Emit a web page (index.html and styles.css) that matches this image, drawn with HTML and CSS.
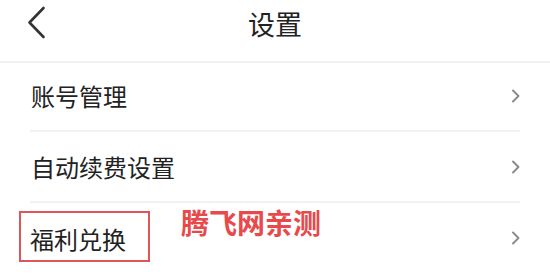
FILE: index.html
```html
<!DOCTYPE html>
<html lang="zh-CN">
<head>
<meta charset="utf-8">
<title>设置</title>
<link rel="stylesheet" href="styles.css">
</head>
<body>
<div class="page">
  <header class="topbar">
    <svg class="back" width="20" height="34" viewBox="0 0 20 34" aria-hidden="true">
      <polyline points="16.5,2 2.5,16.5 16.5,31" fill="none" stroke="#333" stroke-width="2.6" stroke-linecap="round" stroke-linejoin="round"/>
    </svg>
    <h1 class="title">设置</h1>
  </header>
  <ul class="list">
    <li class="row">
      <span class="label">账号管理</span>
      <svg class="arrow" width="10" height="14" viewBox="0 0 10 14" aria-hidden="true"><polyline points="2,1.5 7.5,7 2,12.5" fill="none" stroke="#8a8a8a" stroke-width="1.9" stroke-linecap="round" stroke-linejoin="round"/></svg>
    </li>
    <li class="row">
      <span class="label">自动续费设置</span>
      <svg class="arrow" width="10" height="14" viewBox="0 0 10 14" aria-hidden="true"><polyline points="2,1.5 7.5,7 2,12.5" fill="none" stroke="#8a8a8a" stroke-width="1.9" stroke-linecap="round" stroke-linejoin="round"/></svg>
    </li>
    <li class="row row-last">
      <div class="group">
        <span class="label mark">福利兑换</span>
        <span class="stamp">腾飞网亲测</span>
      </div>
      <svg class="arrow" width="10" height="14" viewBox="0 0 10 14" aria-hidden="true"><polyline points="2,1.5 7.5,7 2,12.5" fill="none" stroke="#8a8a8a" stroke-width="1.9" stroke-linecap="round" stroke-linejoin="round"/></svg>
    </li>
  </ul>
</div>
</body>
</html>
```

FILE: styles.css
```css
html, body {
  margin: 0;
  padding: 0;
  background: #ffffff;
}

body {
  font-family: "Noto Sans CJK SC", "Noto Sans", sans-serif;
  color: #222;
}

.page {
  width: 550px;
  height: 275px;
  overflow: hidden;
}

.topbar {
  position: relative;
  height: 46px;
  margin-bottom: 15px;
  display: flex;
  align-items: center;
  justify-content: center;
  box-shadow: 0 15px 0 0 #fff, 0 17px 0 0 #f1f1f1;
}

.back {
  position: absolute;
  left: 27px;
  top: 6px;
}

.title {
  margin: 0;
  font-size: 27px;
  line-height: 27px;
  font-weight: 400;
  color: #222;
}

.list {
  list-style: none;
  margin: 2px 30px 0 30px;
  padding: 0;
}

.row {
  height: 69px;
  display: flex;
  align-items: center;
  justify-content: space-between;
  border-bottom: 2px solid #f2f2f2;
}

.label {
  font-size: 24px;
  line-height: 24px;
  color: #222;
  margin-left: 1px;
}

.arrow {
  margin-right: -1px;
}

.row-last {
  height: 72px;
  align-items: flex-start;
  border-bottom: 0;
}

.row-last .arrow {
  align-self: center;
  margin-top: -2px;
}

.group {
  display: flex;
  align-items: flex-start;
  padding-top: 4px;
}

.mark {
  margin-top: 4px;
  margin-left: -11px;
  padding: 14px 22px 9px 9px;
  border: 2px solid #e05555;
}

.stamp {
  margin-left: 31px;
  font-size: 28px;
  line-height: 30px;
  font-weight: 700;
  color: #e8494a;
}
```
